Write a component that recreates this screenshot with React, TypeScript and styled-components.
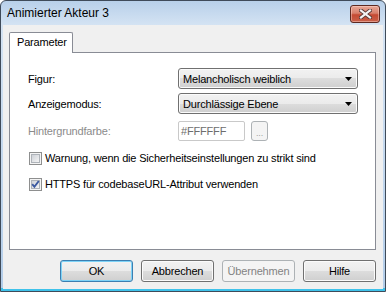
import styled, { createGlobalStyle } from "styled-components";

const GlobalStyle = createGlobalStyle`
  html, body {
    margin: 0;
    padding: 0;
    background: #ffffff;
  }
  body {
    font-family: "Liberation Sans", Arial, sans-serif;
    font-size: 11px;
    letter-spacing: -0.18px;
    color: #000000;
  }
`;

const Window = styled.div`
  box-sizing: border-box;
  width: 386px;
  height: 292px;
  display: flex;
  flex-direction: column;
  border: 1px solid #3f4b5a;
  border-radius: 6px 6px 0 0;
  background: linear-gradient(
    #b8d0ea 0px,
    #d4e3f3 24px,
    #b3cde9 calc(100% - 3px),
    #3fc2ea calc(100% - 3px)
  );
  overflow: hidden;
`;

const TitleBar = styled.div`
  height: 24px;
  flex: none;
  display: flex;
  align-items: flex-start;
  justify-content: space-between;
  padding: 0 5px 0 6px;
`;

const Title = styled.span`
  font-size: 12px;
  letter-spacing: 0;
  line-height: 24px;
  color: #000000;
`;

const CloseButton = styled.div`
  box-sizing: border-box;
  margin-top: 4px;
  width: 30px;
  height: 18px;
  border: 1px solid #5d2920;
  border-radius: 3px;
  background: linear-gradient(#e8a796 0%, #d8806c 45%, #c54a33 55%, #c9614a 100%);
  box-shadow: inset 0 0 0 1px rgba(255, 220, 210, 0.45);
  display: flex;
  align-items: center;
  justify-content: center;
`;

const Client = styled.div`
  flex: 1;
  margin: 0 2px 2px 2px;
  background: #f0f0f0;
  display: flex;
  flex-direction: column;
  padding: 7px 7px 0 6px;
`;

const TabStrip = styled.div`
  height: 20px;
  display: flex;
  align-items: flex-end;
  position: relative;
  z-index: 1;
`;

const Tab = styled.div`
  box-sizing: border-box;
  width: 64px;
  height: 21px;
  margin-bottom: -1px;
  padding-left: 7px;
  border: 1px solid #898c95;
  border-bottom: none;
  border-radius: 2px 2px 0 0;
  background: #ffffff;
  line-height: 19px;
`;

const Panel = styled.div`
  box-sizing: border-box;
  height: 198px;
  border: 1px solid #898c95;
  background: #ffffff;
  padding: 15px 0 0 18px;
  display: flex;
  flex-direction: column;
`;

const FieldRow = styled.div<{ $h: number; $gap: number }>`
  display: grid;
  grid-template-columns: 150px auto;
  align-items: center;
  height: ${(p) => p.$h}px;
  margin-bottom: ${(p) => p.$gap}px;
`;

const Label = styled.span<{ $disabled?: boolean }>`
  color: ${(p) => (p.$disabled ? "#8b8b8b" : "#000000")};
`;

const Select = styled.div`
  box-sizing: border-box;
  width: 180px;
  height: 21px;
  border: 1px solid #707070;
  border-radius: 3px;
  background: linear-gradient(#f2f2f2 0%, #ebebeb 50%, #dddddd 50%, #cfcfcf 100%);
  box-shadow: inset 0 0 0 1px #fbfbfb;
  display: flex;
  align-items: center;
  justify-content: space-between;
  padding: 0 5px 0 4px;
`;

const ColorGroup = styled.div`
  display: flex;
  gap: 6px;
`;

const TextInput = styled.div`
  box-sizing: border-box;
  width: 67px;
  height: 20px;
  border: 1px solid #c9c9c9;
  border-radius: 2px;
  background: #ffffff;
  color: #6d6d6d;
  padding-left: 2px;
  line-height: 18px;
`;

const SmallButton = styled.div`
  box-sizing: border-box;
  width: 17px;
  height: 20px;
  border: 1px solid #adb2b5;
  border-radius: 3px;
  background: #f4f4f4;
  color: #a0a0a0;
  font-size: 9px;
  text-align: center;
  line-height: 22px;
`;

const CheckRow = styled.div<{ $top: number }>`
  display: flex;
  align-items: center;
  gap: 3px;
  height: 16px;
  margin-top: ${(p) => p.$top}px;
  margin-left: 1px;
`;

const ButtonRow = styled.div`
  display: flex;
  justify-content: flex-end;
  gap: 8px;
  margin-top: 10px;
`;

const Button = styled.div<{ $default?: boolean; $disabled?: boolean }>`
  box-sizing: border-box;
  width: 73px;
  height: 22px;
  border: 1px solid ${(p) => (p.$disabled ? "#adb2b5" : p.$default ? "#3c7fb1" : "#707070")};
  border-radius: 3px;
  background: ${(p) =>
    p.$disabled
      ? "#f4f4f4"
      : "linear-gradient(#f2f2f2 0%, #ebebeb 50%, #dddddd 50%, #cfcfcf 100%)"};
  box-shadow: inset 0 0 0 1px ${(p) => (p.$disabled ? "#f4f4f4" : p.$default ? "#7ed3f7" : "#fbfbfb")};
  color: ${(p) => (p.$disabled ? "#838383" : "#000000")};
  text-align: center;
  line-height: 20px;
`;

function Arrow() {
  return (
    <svg width="7" height="4" viewBox="0 0 7 4">
      <path d="M0 0 H7 L3.5 4 Z" fill="#000000" />
    </svg>
  );
}

function CloseGlyph() {
  return (
    <svg width="13" height="10" viewBox="0 0 13 10">
      <path d="M2 1.5 L11 8.5 M11 1.5 L2 8.5" stroke="#5a3a36" strokeWidth="4" strokeLinecap="square" />
      <path d="M2 1.5 L11 8.5 M11 1.5 L2 8.5" stroke="#f4f4f4" strokeWidth="2.2" strokeLinecap="square" />
    </svg>
  );
}

function CheckBox({ checked }: { checked?: boolean }) {
  return (
    <svg width="13" height="13" viewBox="0 0 13 13">
      <defs>
        <linearGradient id="cbfill" x1="0" y1="0" x2="1" y2="1">
          <stop offset="0" stopColor="#cbcfd5" />
          <stop offset="1" stopColor="#f7f7f7" />
        </linearGradient>
      </defs>
      <rect x="0.5" y="0.5" width="12" height="12" fill="#f4f4f4" stroke="#8e8f8f" />
      <rect x="2.5" y="2.5" width="8" height="8" fill="url(#cbfill)" stroke="#aeb3b9" />
      {checked && (
        <path d="M3.2 6.2 L5.4 8.8 L9.8 3" fill="none" stroke="#3b59a0" strokeWidth="1.9" />
      )}
    </svg>
  );
}

export default function App() {
  return (
    <>
      <GlobalStyle />
      <Window>
        <TitleBar>
          <Title>Animierter Akteur 3</Title>
          <CloseButton>
            <CloseGlyph />
          </CloseButton>
        </TitleBar>
        <Client>
          <TabStrip>
            <Tab>Parameter</Tab>
          </TabStrip>
          <Panel>
            <FieldRow $h={21} $gap={4}>
              <Label>Figur:</Label>
              <Select>
                <span>Melancholisch weiblich</span>
                <Arrow />
              </Select>
            </FieldRow>
            <FieldRow $h={21} $gap={7}>
              <Label>Anzeigemodus:</Label>
              <Select>
                <span>Durchlässige Ebene</span>
                <Arrow />
              </Select>
            </FieldRow>
            <FieldRow $h={20} $gap={0}>
              <Label $disabled>Hintergrundfarbe:</Label>
              <ColorGroup>
                <TextInput>#FFFFFF</TextInput>
                <SmallButton>...</SmallButton>
              </ColorGroup>
            </FieldRow>
            <CheckRow $top={9}>
              <CheckBox />
              <span>Warnung, wenn die Sicherheitseinstellungen zu strikt sind</span>
            </CheckRow>
            <CheckRow $top={10}>
              <CheckBox checked />
              <span>HTTPS für codebaseURL-Attribut verwenden</span>
            </CheckRow>
          </Panel>
          <ButtonRow>
            <Button $default>OK</Button>
            <Button>Abbrechen</Button>
            <Button $disabled>Übernehmen</Button>
            <Button>Hilfe</Button>
          </ButtonRow>
        </Client>
      </Window>
    </>
  );
}
